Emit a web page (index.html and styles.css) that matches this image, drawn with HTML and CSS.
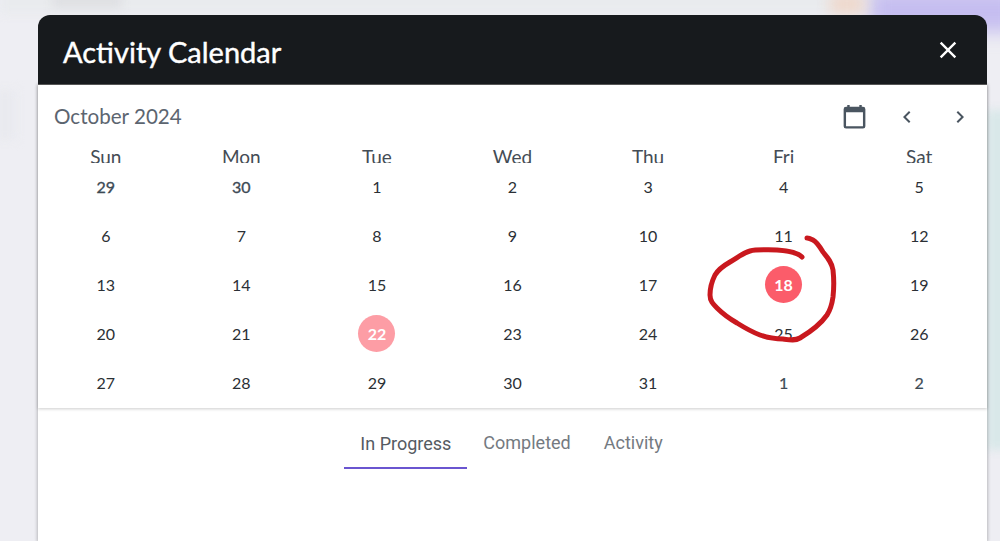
FILE: index.html
```html
<!DOCTYPE html>
<html lang="en">
<head>
<meta charset="utf-8">
<title>Activity Calendar</title>
<link rel="stylesheet" href="styles.css">
</head>
<body>
<div class="blob blob-top"></div>
<div class="blob blob-smudge"></div>
<div class="blob blob-purple"></div>
<div class="blob blob-orange"></div>
<div class="blob blob-green"></div>
<div class="blob blob-grey"></div>
<main class="modal">
  <header class="modal-head">
    <h1 class="modal-title">Activity Calendar</h1>
    <svg class="close" viewBox="0 0 24 24" width="28" height="28"><path d="M19 6.41 17.59 5 12 10.59 6.41 5 5 6.41 10.59 12 5 17.59 6.41 19 12 13.41 17.59 19 19 17.59 13.41 12z" fill="#fff"/></svg>
  </header>
  <div class="modal-body">
    <section class="calendar">
      <div class="toolbar">
        <span class="month">October 2024</span>
        <div class="tools">
          <svg class="cal-icon" viewBox="0 0 24 24" width="29" height="29"><path d="M19 4h-1V2.5h-2V4H8V2.5H6V4H5a2 2 0 0 0-2 2v14a2 2 0 0 0 2 2h14a2 2 0 0 0 2-2V6a2 2 0 0 0-2-2zm0 16H5V8.5h14V20z" fill="#4a5560"/></svg>
          <svg class="chev" viewBox="0 0 24 24" width="24" height="24"><path d="M15.41 7.41 14 6l-6 6 6 6 1.41-1.41L10.83 12z" fill="#4a5560"/></svg>
          <svg class="chev" viewBox="0 0 24 24" width="24" height="24"><path d="M8.59 16.59 10 18l6-6-6-6-1.41 1.41L13.17 12z" fill="#4a5560"/></svg>
        </div>
      </div>
      <div class="weekdays">
        <span>Sun</span><span>Mon</span><span>Tue</span><span>Wed</span><span>Thu</span><span>Fri</span><span>Sat</span>
      </div>
      <div class="days">
        <span class="d out">29</span><span class="d out">30</span><span class="d">1</span><span class="d">2</span><span class="d">3</span><span class="d">4</span><span class="d">5</span>
        <span class="d">6</span><span class="d">7</span><span class="d">8</span><span class="d">9</span><span class="d">10</span><span class="d">11</span><span class="d">12</span>
        <span class="d">13</span><span class="d">14</span><span class="d">15</span><span class="d">16</span><span class="d">17</span><span class="d"><b class="pin today">18</b></span><span class="d">19</span>
        <span class="d">20</span><span class="d">21</span><span class="d"><b class="pin soft">22</b></span><span class="d">23</span><span class="d">24</span><span class="d">25</span><span class="d">26</span>
        <span class="d">27</span><span class="d">28</span><span class="d">29</span><span class="d">30</span><span class="d">31</span><span class="d next">1</span><span class="d next">2</span>
      </div>
    </section>
    <nav class="tabs">
      <a class="tab active">In Progress</a>
      <a class="tab">Completed</a>
      <a class="tab tab-last">Activity</a>
    </nav>
  </div>
</main>
<svg class="scribble" viewBox="0 0 1000 541" width="1000" height="541"><path d="M802 257C798 253 792 251 777 250C765 250 757 249 750 251C743 253 737 258 730 262C723 266 718 270 715 275C712 281 710 288 710 295C710 301 713 304 717 308C723 314 730 319 737 323C745 328 752 332 760 335C768 338 775 339 783 339C790 340 795 341 800 338C810 332 820 325 827 315C831 309 832 304 833 297C834 288 834 279 833 270C832 263 828 258 823 252C820 247 817 242 813 240C811 239 809 238 807 238" fill="none" stroke="#c9181e" stroke-width="5" stroke-linecap="round" stroke-linejoin="round"/></svg>
</body>
</html>
```
FILE: styles.css
```css
* { box-sizing: border-box; }
html, body { margin: 0; height: 100%; }
body {
  width: 1000px;
  height: 541px;
  overflow: hidden;
  position: relative;
  background: #eeeef3;
  padding: 15px 13px 0 38px;
  font-family: "Lato", "Liberation Sans", sans-serif;
}
.blob { position: absolute; filter: blur(5px); }
.blob-top { left: 0; top: -10px; width: 1000px; height: 24px; background: #e9ebee; }
.blob-smudge { left: 52px; top: -8px; width: 70px; height: 16px; background: #dfe0e3; }
.blob-purple { left: 870px; top: -10px; width: 150px; height: 42px; background: #c5bdf0; filter: blur(9px); }
.blob-orange { left: 830px; top: -6px; width: 34px; height: 20px; background: #efd7ca; filter: blur(7px); }
.blob-green { left: 986px; top: 110px; width: 30px; height: 340px; background: #d9e8e9; }
.blob-grey { left: -6px; top: 90px; width: 22px; height: 50px; background: #e9eaef; }
.modal {
  position: relative;
  width: 949px;
  height: 526px;
  display: flex;
  flex-direction: column;
}
.modal-head {
  position: relative;
  z-index: 1;
  height: 70px;
  flex: none;
  background: #171a1d;
  border-radius: 12px 12px 0 0;
  display: flex;
  align-items: center;
  justify-content: space-between;
  padding: 0 25px;
  border-bottom: 1px solid #555;
}
.modal-title {
  margin: 3px 0 0;
  color: #fff;
  font-size: 29px;
  font-weight: 400;
  -webkit-text-stroke: 0.4px #fff;
}
.modal-body {
  flex: 1;
  background: #fff;
  box-shadow: 0 0 3px 1px rgba(0, 0, 0, 0.22);
}
.calendar {
  height: 323px;
  overflow: hidden;
  box-shadow: 0 1px 3px rgba(0, 0, 0, 0.2);
  position: relative;
}
.toolbar {
  height: 56px;
  display: flex;
  align-items: center;
  justify-content: space-between;
  padding: 7px 15px 0 16px;
}
.month { color: #5c6570; font-size: 20.6px; margin-top: -2px; }
.tools { display: flex; align-items: center; gap: 29px; }
.cal-icon { margin-right: -2.5px; }
.weekdays {
  display: grid;
  grid-template-columns: repeat(7, 1fr);
  height: 22px;
  overflow: hidden;
  color: #444c55;
  font-size: 19px;
  line-height: 32px;
  text-align: center;
}
.days {
  display: grid;
  grid-template-columns: repeat(7, 1fr);
  grid-auto-rows: 49px;
  margin-top: -1px;
}
.d {
  display: flex;
  align-items: center;
  justify-content: center;
  color: #2b3035;
  font-size: 16px;
}
.out { color: #3d4a55; -webkit-text-stroke: 0.35px #3d4a55; }
.next { color: #3d4a55; -webkit-text-stroke: 0.2px #3d4a55; }
.pin {
  width: 37px;
  height: 37px;
  border-radius: 50%;
  display: flex;
  align-items: center;
  justify-content: center;
  color: #fff;
  font-weight: 700;
}
.today { background: #fb5c6a; }
.soft { background: #fd9da5; }
.tabs {
  display: flex;
  justify-content: center;
  height: 61px;
  padding-right: 2px;
}
.tab {
  color: #747a81;
  font-family: "Roboto", "Liberation Sans", sans-serif;
  font-size: 18px;
  padding: 24px 16px 0;
}
.tab-last { margin-left: 1px; }
.active {
  color: #555b62;
  padding-top: 25px;
  border-bottom: 2px solid #6a55d0;
}
.scribble { position: absolute; left: 0; top: 0; pointer-events: none; }
```
